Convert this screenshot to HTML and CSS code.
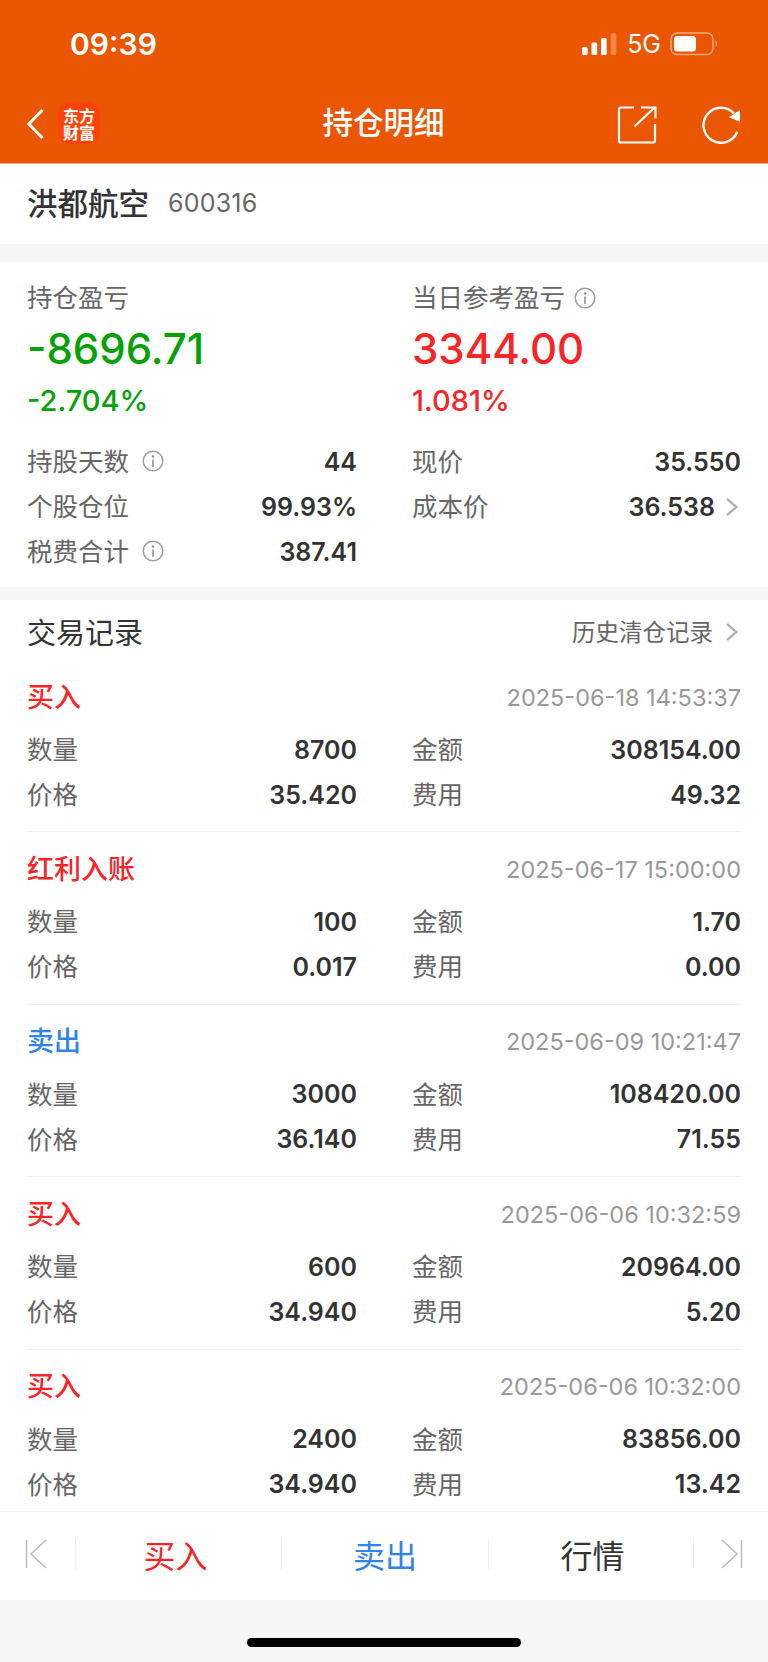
FILE: index.html
```html
<!DOCTYPE html>
<html lang="zh-CN">
<head>
<meta charset="utf-8">
<title>持仓明细</title>
<link rel="stylesheet" href="styles.css">
</head>
<body>
<div class="screen">
  <header class="top">
    <div class="status">
      <span class="clock">09:39</span>
      <div class="status-right">
        <svg class="signal" width="35" height="22" viewBox="0 0 35 22"><rect x="0" y="14" width="5.700" height="8" rx="1.500" fill="#fff"/><rect x="9.500" y="9.500" width="5.700" height="12.500" rx="1.500" fill="#fff"/><rect x="19" y="5" width="5.700" height="17" rx="1.500" fill="#fff"/><rect x="28.700" y="0.300" width="5.700" height="21.700" rx="1.500" fill="#fff" fill-opacity=".28"/></svg>
        <span class="net">5G</span>
        <svg class="battery" width="50" height="24" viewBox="0 0 50 24"><rect x="1" y="1" width="42" height="21.500" rx="6" fill="none" stroke="#fff" stroke-opacity=".5" stroke-width="1.500"/><rect x="4" y="4" width="22" height="15.500" rx="3.500" fill="#fff"/><path d="M45.500 8.500c2 .8 2 5.700 0 6.500z" fill="#fff" fill-opacity=".5"/></svg>
      </div>
    </div>
    <nav class="nav">
      <div class="nav-left">
        <svg class="back" width="18" height="32" viewBox="0 0 18 32"><path d="M15.500 2 1.800 16l13.700 14" fill="none" stroke="#fff" stroke-width="3"/></svg>
        <div class="logo"><span>东方</span><span>财富</span></div>
      </div>
      <h1 class="title">持仓明细</h1>
      <div class="nav-right">
        <svg width="40" height="40" viewBox="0 0 40 40"><path d="M17 3.500H4a2 2 0 0 0-2 2v31a2 2 0 0 0 2 2h32a2 2 0 0 0 2-2V20" fill="none" stroke="#fff" stroke-width="2.200"/><path d="M17.500 22.500 37.500 3.500M24 3.500h14.500v11" fill="none" stroke="#fff" stroke-width="2.200"/></svg>
        <svg width="40" height="40" viewBox="0 0 40 40"><path d="M34 9.500A17.500 17.500 0 1 0 37.300 27.700" fill="none" stroke="#fff" stroke-width="2.400"/><path d="M40 6v11.700L29 13.300z" fill="#fff"/></svg>
      </div>
    </nav>
  </header>

  <section class="stock">
    <span class="stock-name">洪都航空</span>
    <span class="stock-code">600316</span>
  </section>

  <section class="summary">
    <div class="col">
      <div class="cap">持仓盈亏</div>
      <div class="big down">-8696.71</div>
      <div class="pct down">-2.704%</div>
      <div class="rows">
        <div class="row"><span class="lab">持股天数<svg class="info" width="22" height="22" viewBox="0 0 22 22"><circle cx="11" cy="11" r="9.800" fill="none" stroke="#a0a0a0" stroke-width="1.500"/><circle cx="11" cy="6.500" r="1.200" fill="#909090"/><path d="M11 9.500v7.500" stroke="#909090" stroke-width="1.600"/></svg></span><b>44</b></div>
        <div class="row"><span class="lab">个股仓位</span><b>99.93%</b></div>
        <div class="row"><span class="lab">税费合计<svg class="info" width="22" height="22" viewBox="0 0 22 22"><circle cx="11" cy="11" r="9.800" fill="none" stroke="#a0a0a0" stroke-width="1.500"/><circle cx="11" cy="6.500" r="1.200" fill="#909090"/><path d="M11 9.500v7.500" stroke="#909090" stroke-width="1.600"/></svg></span><b>387.41</b></div>
      </div>
    </div>
    <div class="col">
      <div class="cap">当日参考盈亏<svg class="info" width="22" height="22" viewBox="0 0 22 22"><circle cx="11" cy="11" r="9.800" fill="none" stroke="#a0a0a0" stroke-width="1.500"/><circle cx="11" cy="6.500" r="1.200" fill="#909090"/><path d="M11 9.500v7.500" stroke="#909090" stroke-width="1.600"/></svg></div>
      <div class="big up">3344.00</div>
      <div class="pct up">1.081%</div>
      <div class="rows">
        <div class="row"><span class="lab">现价</span><b>35.550</b></div>
        <div class="row"><span class="lab">成本价</span><b class="with-arrow">36.538<svg class="chev" width="12" height="18" viewBox="0 0 12 18"><path d="M1 1l9.500 8L1 17" fill="none" stroke="#b3b3b3" stroke-width="2.400"/></svg></b></div>
      </div>
    </div>
  </section>

  <section class="records">
    <div class="rec-head">
      <span class="rec-title">交易记录</span>
      <span class="rec-link">历史清仓记录<svg class="chev" width="12" height="18" viewBox="0 0 12 18"><path d="M1 1l9.500 8L1 17" fill="none" stroke="#b3b3b3" stroke-width="2.400"/></svg></span>
    </div>

    <article class="trade">
      <div class="trade-top"><span class="kind up">买入</span><time>2025-06-18 14:53:37</time></div>
      <div class="grid">
        <div class="row"><span class="lab">数量</span><b>8700</b></div>
        <div class="row"><span class="lab">金额</span><b>308154.00</b></div>
        <div class="row"><span class="lab">价格</span><b>35.420</b></div>
        <div class="row"><span class="lab">费用</span><b>49.32</b></div>
      </div>
    </article>

    <article class="trade">
      <div class="trade-top"><span class="kind up">红利入账</span><time>2025-06-17 15:00:00</time></div>
      <div class="grid">
        <div class="row"><span class="lab">数量</span><b>100</b></div>
        <div class="row"><span class="lab">金额</span><b>1.70</b></div>
        <div class="row"><span class="lab">价格</span><b>0.017</b></div>
        <div class="row"><span class="lab">费用</span><b>0.00</b></div>
      </div>
    </article>

    <article class="trade">
      <div class="trade-top"><span class="kind sell">卖出</span><time>2025-06-09 10:21:47</time></div>
      <div class="grid">
        <div class="row"><span class="lab">数量</span><b>3000</b></div>
        <div class="row"><span class="lab">金额</span><b>108420.00</b></div>
        <div class="row"><span class="lab">价格</span><b>36.140</b></div>
        <div class="row"><span class="lab">费用</span><b>71.55</b></div>
      </div>
    </article>

    <article class="trade">
      <div class="trade-top"><span class="kind up">买入</span><time>2025-06-06 10:32:59</time></div>
      <div class="grid">
        <div class="row"><span class="lab">数量</span><b>600</b></div>
        <div class="row"><span class="lab">金额</span><b>20964.00</b></div>
        <div class="row"><span class="lab">价格</span><b>34.940</b></div>
        <div class="row"><span class="lab">费用</span><b>5.20</b></div>
      </div>
    </article>

    <article class="trade last">
      <div class="trade-top"><span class="kind up">买入</span><time>2025-06-06 10:32:00</time></div>
      <div class="grid">
        <div class="row"><span class="lab">数量</span><b>2400</b></div>
        <div class="row"><span class="lab">金额</span><b>83856.00</b></div>
        <div class="row"><span class="lab">价格</span><b>34.940</b></div>
        <div class="row"><span class="lab">费用</span><b>13.42</b></div>
      </div>
    </article>
  </section>

  <footer class="bar">
    <div class="end"><svg width="22" height="30" viewBox="0 0 22 30"><path d="M1.500 1v28M21 1 6 15l15 14" fill="none" stroke="#bdbdbd" stroke-width="1.600"/></svg></div>
    <div class="act up shift">买入</div>
    <div class="act sell">卖出</div>
    <div class="act dark">行情</div>
    <div class="end"><svg width="22" height="30" viewBox="0 0 22 30"><path d="M20.500 1v28M1 1l15 14L1 29" fill="none" stroke="#bdbdbd" stroke-width="1.600"/></svg></div>
  </footer>
  <div class="home"><span class="indicator"></span></div>
</div>
</body>
</html>
```
FILE: styles.css
```css
* { box-sizing: border-box; }
html, body { margin: 0; padding: 0; }
body {
  width: 768px;
  height: 1662px;
  overflow: hidden;
  background: #f5f6f8;
  font-family: "Inter", "Liberation Sans", "Noto Sans CJK SC", sans-serif;
  color: #333;
}
.screen { display: flex; flex-direction: column; height: 1662px; }

/* orange header */
.top { height: 164px; background: #eb5602; border-bottom: 1px solid #f4a27a; color: #fff; flex: none; }
.status { height: 85px; padding: 29px 0 0 70px; display: flex; justify-content: space-between; align-items: flex-start; }
.clock { font-size: 30px; line-height: 30px; font-weight: 600; }
.status-right { display: flex; align-items: center; height: 30px; margin-right: 48px; }
.signal { display: block; }
.net { font-size: 25px; line-height: 26px; margin-left: 10px; margin-right: 9px; }
.battery { display: block; }
.nav { height: 78px; padding: 0 28px 0 27px; display: grid; grid-template-columns: 1fr auto 1fr; align-items: center; }
.nav-left { display: flex; align-items: center; gap: 13px; }
.logo {
  width: 42px; height: 42px; margin-bottom: 2px; padding-top: 1px; border-radius: 10px; background: #fc440a;
  display: flex; flex-direction: column; align-items: center; justify-content: center;
  font-family: "Noto Sans CJK SC", sans-serif; font-weight: 700; font-size: 16px; line-height: 17px;
}
.title { margin: 0 0 6px; font-size: 30.500px; font-weight: 500; line-height: 40px; font-family: "Noto Sans CJK SC", sans-serif; }
.nav-right { display: flex; justify-content: flex-end; gap: 43px; }

/* stock name row */
.stock { flex: none; height: 80px; background: #fff; padding: 0 27px; display: flex; align-items: center; gap: 19px; }
.stock-name { font-size: 30.500px; font-weight: 500; color: #333; margin-bottom: 4px; font-family: "Noto Sans CJK SC", sans-serif; }
.stock-code { font-size: 25px; color: #666; letter-spacing: .2px; margin-bottom: 2px; }

/* position summary */
.summary { flex: none; margin-top: 18px; height: 325px; background: #fff; padding: 16px 27px 0; display: grid; grid-template-columns: 330px 329px; column-gap: 55px; }
.cap { font-size: 25.500px; line-height: 36px; color: #666; display: flex; align-items: center; font-family: "Noto Sans CJK SC", sans-serif; }
.cap .info { margin-left: 9px; }
.big { font-size: 42px; line-height: 50px; font-weight: 500; margin-top: 10px; }
.pct { font-size: 29px; line-height: 40px; font-weight: 500; margin-top: 7px; }
.rows { margin-top: 18px; }
.up { color: #f92425; }
.down { color: #04a203; }
.sell { color: #2f84ed; }
.row { display: flex; justify-content: space-between; align-items: center; height: 45px; }
.lab { font-size: 25.500px; color: #666; display: flex; align-items: center; margin-bottom: 4px; font-family: "Noto Sans CJK SC", sans-serif; }
.row b { font-size: 25px; font-weight: 600; color: #333; }
.row b.with-arrow { display: flex; align-items: center; margin-right: 3px; }
.info { flex: none; margin-left: 13px; margin-top: 3px; }
.chev { flex: none; margin-left: 11px; }

/* trade records */
.records { flex: none; margin-top: 13px; height: 911px; background: #fff; padding: 0 27px; }
.rec-head { height: 60px; padding-top: 1px; display: flex; justify-content: space-between; align-items: center; }
.rec-title { font-size: 29px; color: #333; font-family: "Noto Sans CJK SC", sans-serif; }
.rec-link { font-size: 23.500px; color: #666; display: flex; align-items: center; margin-right: 3px; font-family: "Noto Sans CJK SC", sans-serif; }
.rec-link .chev { margin-left: 13px; margin-top: 2px; }
.trade { height: 172.400px; padding-top: 12px; border-bottom: 1px solid #f0f0f0; }
.trade.last { border-bottom: 0; }
.trade-top { height: 46px; display: flex; justify-content: space-between; align-items: center; }
.kind { font-size: 27px; font-weight: 500; font-family: "Noto Sans CJK SC", sans-serif; }
time { font-size: 23.500px; color: #999; margin-top: 4px; }
.grid { display: grid; grid-template-columns: 330px 329px; column-gap: 55px; margin-top: 9px; }

/* bottom action bar */
.bar { flex: none; height: 89px; background: #fff; border-top: 1px solid #f0f0f0; display: grid; grid-template-columns: 75px 206px 207px 205px 1fr; align-items: center; padding-bottom: 4px; }
.end { display: flex; justify-content: center; height: 30px; }
.end:first-child { justify-content: flex-start; padding-left: 25px; }
.end:last-child { justify-content: flex-end; padding-right: 25px; border-left: 1px solid #eee; }
.act { height: 30px; display: flex; align-items: center; justify-content: center; font-size: 32px; border-left: 1px solid #eee; font-family: "Noto Sans CJK SC", sans-serif; }
.shift { padding-right: 6px; }
.dark { color: #333; padding-left: 3px; }

/* gesture bar */
.home { flex: 1; display: flex; justify-content: center; padding-top: 38px; }
.indicator { width: 274px; height: 9px; border-radius: 5px; background: #000; }
```
